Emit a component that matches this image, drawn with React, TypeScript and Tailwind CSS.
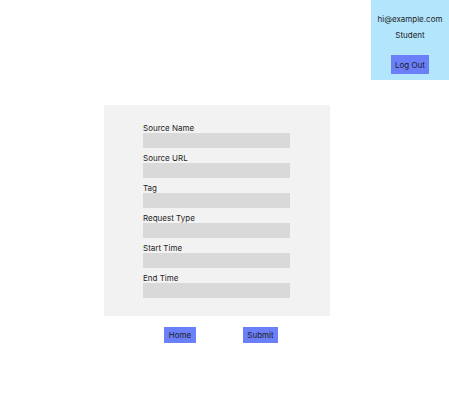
export default function App() {
  const fields = ['Source Name', 'Source URL', 'Tag', 'Request Type', 'Start Time', 'End Time'];

  return (
    <div className="w-[449px] h-[400px] bg-white font-['Inter',sans-serif] text-[8px] text-[#1e1e1e]">
      {/* user box */}
      <div className="flex justify-end">
        <div className="w-[78px] h-[80px] bg-[#b3e5fc] flex flex-col items-center pt-[14px]">
          <span className="leading-[10px]">hi@example.com</span>
          <span className="leading-[10px] mt-[6px]">Student</span>
          <button className="mt-[15px] w-[38px] h-[19px] bg-[#6b7ff9] leading-none">Log Out</button>
        </div>
      </div>

      {/* form */}
      <div className="ml-[104px] mt-[25px] w-[226px] h-[211px] bg-[#f2f2f2] pt-[13px] pl-[39px]">
        {fields.map((label) => (
          <div key={label} className="flex flex-col">
            <label className="h-[15px] flex items-end leading-[10px]">{label}</label>
            <div className="w-[147px] h-[15px] bg-[#d9d9d9]" />
          </div>
        ))}
      </div>

      <div className="flex mt-[11px]">
        <button className="ml-[164px] w-[32px] h-[16px] bg-[#6b7ff9] leading-none">Home</button>
        <button className="ml-[47px] w-[35px] h-[16px] bg-[#6b7ff9] leading-none">Submit</button>
      </div>
    </div>
  );
}
